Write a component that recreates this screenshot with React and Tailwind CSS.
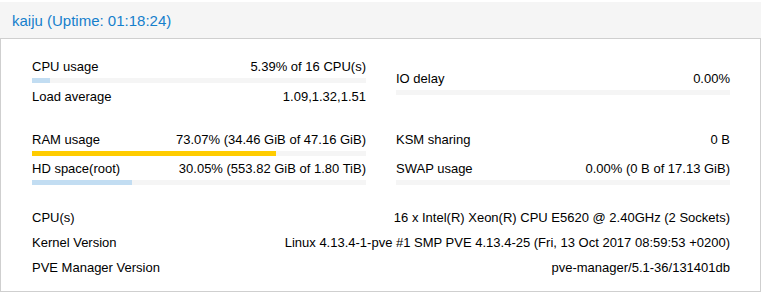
import React from "react";

const font = { fontFamily: '"Liberation Sans", Arial, sans-serif' };

function Bar({ pct, color }) {
  return (
    <div className="mt-[4px] h-[5px] w-full bg-[#f5f5f5]">
      {pct > 0 && <div className={`h-full ${color}`} style={{ width: `${pct}%` }} />}
    </div>
  );
}

function Item({ label, value, pct, color }) {
  return (
    <div className="flex flex-col">
      <div className="flex justify-between leading-[15px] whitespace-nowrap">
        <span>{label}</span>
        <span>{value}</span>
      </div>
      {pct !== undefined && <Bar pct={pct} color={color} />}
    </div>
  );
}

export default function App() {
  return (
    <div className="bg-white h-[297px] w-[770px] pt-[2px] text-[13px] text-black" style={font}>
      <div className="w-[761px]">
        <div className="h-[36px] bg-[#f5f5f5] flex items-center pl-[12px] pt-[2px] text-[15px] text-[#157fcc]">
          kaiju (Uptime: 01:18:24)
        </div>
        <div className="border border-[#cfcfcf] pl-[31px] pr-[30px] pt-[20px] pb-[16px]">
          <div className="grid grid-cols-2 gap-x-[30px]">
            <div className="flex flex-col gap-[6px]">
              <Item label="CPU usage" value="5.39% of 16 CPU(s)" pct={5.39} color="bg-[#c2ddf2]" />
              <Item label="Load average" value="1.09,1.32,1.51" />
            </div>
            <div className="pt-[12px]">
              <Item label="IO delay" value="0.00%" pct={0} color="bg-[#c2ddf2]" />
            </div>
          </div>
          <div className="mt-[28px] grid grid-cols-2 gap-x-[30px] gap-y-[5px]">
            <Item label="RAM usage" value="73.07% (34.46 GiB of 47.16 GiB)" pct={73.07} color="bg-[#ffcc00]" />
            <Item label="KSM sharing" value="0 B" />
            <Item label="HD space(root)" value="30.05% (553.82 GiB of 1.80 TiB)" pct={30.05} color="bg-[#c2ddf2]" />
            <Item label="SWAP usage" value="0.00% (0 B of 17.13 GiB)" pct={0} color="bg-[#c2ddf2]" />
          </div>
          <div className="mt-[25px] flex flex-col gap-[10px]">
            <Item label="CPU(s)" value="16 x Intel(R) Xeon(R) CPU E5620 @ 2.40GHz (2 Sockets)" />
            <Item label="Kernel Version" value="Linux 4.13.4-1-pve #1 SMP PVE 4.13.4-25 (Fri, 13 Oct 2017 08:59:53 +0200)" />
            <Item label="PVE Manager Version" value="pve-manager/5.1-36/131401db" />
          </div>
        </div>
      </div>
    </div>
  );
}
